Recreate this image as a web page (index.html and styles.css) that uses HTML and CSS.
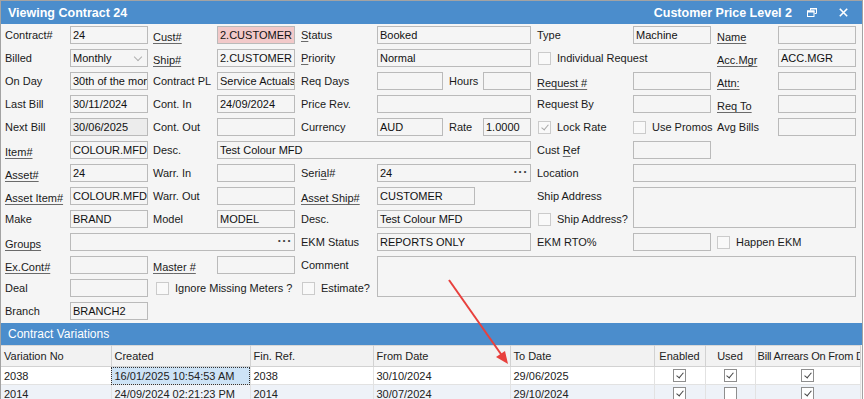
FILE: index.html
```html
<!DOCTYPE html>
<html lang="en">
<head>
    <meta charset="UTF-8">
    <meta name="viewport" content="width=device-width, initial-scale=1.0">
    <title>Viewing Contract 24</title>
    <link rel="stylesheet" href="styles.css">
</head>
<body>
<div class="window">
    <div class="titlebar">
        <span class="title">Viewing Contract 24</span>
        <span class="title-right">Customer Price Level 2</span>
        <svg class="restore" width="10" height="9" viewBox="0 0 10 9">
            <path d="M3.5 2.5V0.5h6v5H7.5" fill="none" stroke="#fff" stroke-width="1"/>
            <rect x="0.5" y="3" width="6.5" height="5.5" fill="none" stroke="#fff" stroke-width="1"/>
            <rect x="0" y="2.5" width="7.5" height="2" fill="#fff"/>
            <rect x="3" y="0" width="7" height="1.5" fill="#fff"/>
        </svg>
        <svg class="close" width="9" height="9" viewBox="0 0 9 9">
            <path d="M0.8 0.8L8.2 8.2M8.2 0.8L0.8 8.2" stroke="#fff" stroke-width="1.6"/>
        </svg>
    </div>

    <div class="form">
        <!-- row 1 -->
        <div class="lb c1">Contract#</div>
        <div class="box c2">24</div>
        <div class="lb c3 lnk">Cust#</div>
        <div class="box c4 pink">2.CUSTOMER</div>
        <div class="lb c5"><u>S</u>tatus</div>
        <div class="box s6-8">Booked</div>
        <div class="lb c9">Type</div>
        <div class="box c10">Machine</div>
        <div class="lb c11 lnk">Name</div>
        <div class="box c12"></div>

        <!-- row 2 -->
        <div class="lb c1">Billed</div>
        <div class="box c2 combo">Monthly<span class="chev"></span></div>
        <div class="lb c3 lnk">Ship#</div>
        <div class="box c4">2.CUSTOMER</div>
        <div class="lb c5"><u>P</u>riority</div>
        <div class="box s6-8">Normal</div>
        <div class="chk s9-10"><span class="cb"></span>Individual Request</div>
        <div class="lb c11 lnk">Acc.<u>M</u>gr</div>
        <div class="box c12">ACC.MGR</div>

        <!-- row 3 -->
        <div class="lb c1">On Day</div>
        <div class="box c2">30th of the month</div>
        <div class="lb c3">Contract PL</div>
        <div class="box c4">Service Actuals</div>
        <div class="lb c5">Req Days</div>
        <div class="box c6"></div>
        <div class="lb c7">Hours</div>
        <div class="box c8"></div>
        <div class="lb c9 lnk">Request #</div>
        <div class="box c10"></div>
        <div class="lb c11 lnk">Attn:</div>
        <div class="box c12"></div>

        <!-- row 4 -->
        <div class="lb c1">Last Bill</div>
        <div class="box c2">30/11/2024</div>
        <div class="lb c3">Cont. In</div>
        <div class="box c4">24/09/2024</div>
        <div class="lb c5">Price Rev.</div>
        <div class="box s6-8"></div>
        <div class="lb c9">Request By</div>
        <div class="box c10"></div>
        <div class="lb c11 lnk">Req To</div>
        <div class="box c12"></div>

        <!-- row 5 -->
        <div class="lb c1">Next Bill</div>
        <div class="box c2 ro">30/06/2025</div>
        <div class="lb c3">Cont. Out</div>
        <div class="box c4"></div>
        <div class="lb c5">Currency</div>
        <div class="box c6">AUD</div>
        <div class="lb c7">Rate</div>
        <div class="box c8">1.0000</div>
        <div class="chk c9"><span class="cb on dim"></span>Lock Rate</div>
        <div class="chk c10 flush"><span class="cb"></span>Use Promos</div>
        <div class="lb c11">Avg Bills</div>
        <div class="box c12"></div>

        <!-- row 6 -->
        <div class="lb c1 lnk">Item#</div>
        <div class="box c2">COLOUR.MFD</div>
        <div class="lb c3">Desc.</div>
        <div class="box s4-8">Test Colour MFD</div>
        <div class="lb c9">Cust <u>R</u>ef</div>
        <div class="box c10"></div>

        <!-- row 7 -->
        <div class="lb c1 lnk">Asset#</div>
        <div class="box c2">24</div>
        <div class="lb c3">Warr. In</div>
        <div class="box c4"></div>
        <div class="lb c5">Seri<u>a</u>l#</div>
        <div class="box s6-8 dots">24</div>
        <div class="lb c9">Location</div>
        <div class="box s10-12"></div>

        <!-- row 8 -->
        <div class="lb c1 lnk">Asset Item#</div>
        <div class="box c2">COLOUR.MFD</div>
        <div class="lb c3">Warr. Out</div>
        <div class="box c4"></div>
        <div class="lb c5 lnk">Asset S<u>h</u>ip#</div>
        <div class="box s6-8 short">CUSTOMER</div>
        <div class="lb c9">Ship Address</div>
        <div class="box s10-12 tall"></div>

        <!-- row 9 -->
        <div class="lb c1">Make</div>
        <div class="box c2">BRAND</div>
        <div class="lb c3">Model</div>
        <div class="box c4">MODEL</div>
        <div class="lb c5">Desc.</div>
        <div class="box s6-8">Test Colour MFD</div>
        <div class="chk c9"><span class="cb"></span>Ship Address?</div>

        <!-- row 10 -->
        <div class="lb c1 lnk">Groups</div>
        <div class="box s2-4 dots"></div>
        <div class="lb c5">EKM Status</div>
        <div class="box s6-8">REPORTS ONLY</div>
        <div class="lb c9">EKM RTO%</div>
        <div class="box c10"></div>
        <div class="chk c11 near"><span class="cb"></span>Happen EKM</div>

        <!-- row 11 -->
        <div class="lb c1 lnk">Ex.Cont#</div>
        <div class="box c2"></div>
        <div class="lb c3 lnk">Mas<u>t</u>er #</div>
        <div class="box c4"></div>
        <div class="lb c5">Comment</div>
        <div class="box s6-12 tall"></div>

        <!-- row 12 -->
        <div class="lb c1">Deal</div>
        <div class="box c2"></div>
        <div class="chk s3-4 wide"><span class="cb"></span>Ignore Missing Meters ?</div>
        <div class="chk c5"><span class="cb"></span>Estimate?</div>

        <!-- row 13 -->
        <div class="lb c1">Branch</div>
        <div class="box c2">BRANCH2</div>
    </div>

    <div class="section-head">Contract Variations</div>

    <table class="vgrid">
        <colgroup>
            <col class="w-no">
            <col class="w-created">
            <col class="w-fin">
            <col class="w-from">
            <col class="w-to">
            <col class="w-en">
            <col class="w-used">
            <col class="w-bill">
        </colgroup>
        <thead>
            <tr>
                <th>Variation No</th>
                <th>Created</th>
                <th>Fin. Ref.</th>
                <th>From Date</th>
                <th>To Date</th>
                <th class="mid">Enabled</th>
                <th class="mid">Used</th>
                <th class="tight">Bill Arrears On From Date</th>
            </tr>
        </thead>
        <tbody>
            <tr>
                <td>2038</td>
                <td class="sel">16/01/2025 10:54:53 AM</td>
                <td>2038</td>
                <td>30/10/2024</td>
                <td>29/06/2025</td>
                <td class="mid"><span class="gcb on"></span></td>
                <td class="mid"><span class="gcb on"></span></td>
                <td class="mid"><span class="gcb on"></span></td>
            </tr>
            <tr class="alt">
                <td>2014</td>
                <td>24/09/2024 02:21:23 PM</td>
                <td>2014</td>
                <td>30/07/2024</td>
                <td>29/10/2024</td>
                <td class="mid"><span class="gcb on"></span></td>
                <td class="mid"><span class="gcb"></span></td>
                <td class="mid"><span class="gcb on"></span></td>
            </tr>
        </tbody>
    </table>

    <svg class="arrow" width="864" height="399" viewBox="0 0 864 399">
        <line x1="449" y1="280" x2="503" y2="357" stroke="#e8403d" stroke-width="2"/>
        <path d="M508 364L496 357L505 351Z" fill="#e8403d"/>
    </svg>
</div>
</body>
</html>
```

FILE: styles.css
```css
html, body {
    margin: 0;
    padding: 0;
    background: #ffffff;
    overflow: hidden;
}
body {
    font-family: "Liberation Sans", Arial, sans-serif;
    font-size: 11px;
    color: #1a1a1a;
}
.window {
    position: relative;
    width: 863px;
    height: 399px;
    box-sizing: border-box;
    border: 1px solid #a3a3a3;
    border-bottom: none;
    background: #f5f5f5;
    overflow: hidden;
}

/* title bar */
.titlebar {
    height: 23px;
    background: #4b8dcc;
    color: #fff;
    display: flex;
    align-items: center;
    padding: 0 0 0 7px;
}
.title {
    font-weight: bold;
    font-size: 12.5px;
    flex: 1;
}
.title-right {
    font-weight: bold;
    font-size: 12.5px;
    margin-right: 15px;
}
.restore {
    margin-right: 22px;
    margin-top: -1px;
}
.close {
    margin-right: 14px;
}

/* form grid */
.form {
    display: grid;
    grid-template-columns: 66px 78px 69px 78px 82px 66px 40px 48px 102px 78px 67px 78px;
    grid-auto-rows: 18px;
    row-gap: 5px;
    padding: 2px 0 3px 3px;
}
.c1 { grid-column: 1; }
.c2 { grid-column: 2; }
.c3 { grid-column: 3; }
.c4 { grid-column: 4; }
.c5 { grid-column: 5; }
.c6 { grid-column: 6; }
.c7 { grid-column: 7; }
.c8 { grid-column: 8; }
.c9 { grid-column: 9; }
.c10 { grid-column: 10; }
.c11 { grid-column: 11; }
.c12 { grid-column: 12; }
.s2-4 { grid-column: 2 / 5; }
.s3-4 { grid-column: 3 / 5; }
.s4-8 { grid-column: 4 / 9; }
.s6-8 { grid-column: 6 / 9; }
.s6-12 { grid-column: 6 / 13; }
.s9-10 { grid-column: 9 / 11; }
.s10-12 { grid-column: 10 / 13; }

.lb {
    line-height: 18px;
    padding-left: 6px;
    white-space: nowrap;
}
.lb.c1 {
    padding-left: 1px;
}
.lb.c3 {
    padding-left: 5px;
}
.lb u, .lnk {
    text-decoration: underline;
    text-underline-offset: 2px;
    text-decoration-color: #6a6a6a;
}
.lnk {
    padding-top: 2px;
    height: 16px;
}

.box {
    box-sizing: border-box;
    height: 18px;
    border: 1px solid #bababa;
    background: #f5f5f5;
    line-height: 16px;
    padding-left: 2px;
    white-space: nowrap;
    overflow: hidden;
    color: #111;
    position: relative;
}
.box.pink {
    background: #f2c9c9;
}
.box.ro {
    background: #ececec;
}
.box.short {
    width: 98px;
}
.box.tall {
    grid-row: span 2;
    height: 41px;
}
.box.dots::after {
    content: "\00b7\00b7\00b7";
    position: absolute;
    right: 2px;
    top: -1px;
    font-weight: bold;
    font-size: 13px;
    color: #444;
    letter-spacing: 0.5px;
}
.combo .chev {
    position: absolute;
    right: 6px;
    top: 4px;
    width: 5px;
    height: 5px;
    border-right: 1px solid #b0b0b0;
    border-bottom: 1px solid #b0b0b0;
    transform: rotate(45deg);
}

/* checkboxes */
.chk {
    display: flex;
    align-items: center;
    padding-left: 7px;
    white-space: nowrap;
}
.chk.flush {
    padding-left: 0;
}
.chk.near {
    padding-left: 6px;
}
.chk.wide {
    padding-left: 8px;
}
.cb {
    width: 13px;
    height: 13px;
    box-sizing: border-box;
    border: 1px solid #cbcbcb;
    background: #f9f9f9;
    margin-right: 6px;
    position: relative;
    flex: none;
}
.cb.on::after, .gcb.on::after {
    content: "";
    position: absolute;
    left: 3.5px;
    top: 1px;
    width: 3px;
    height: 6px;
    border-right: 1.5px solid #444;
    border-bottom: 1.5px solid #444;
    transform: rotate(40deg);
}
.cb.dim::after {
    border-color: #a8a8a8;
}

/* variations grid */
.section-head {
    height: 22px;
    line-height: 22px;
    background: #4b8dcc;
    color: #fff;
    font-size: 12px;
    padding-left: 7px;
}
.vgrid {
    border-collapse: collapse;
    table-layout: fixed;
    width: 859px;
    background: #fff;
}
.w-no { width: 110px; }
.w-created { width: 139px; }
.w-fin { width: 123px; }
.w-from { width: 137px; }
.w-to { width: 144px; }
.w-en { width: 51px; }
.w-used { width: 50px; }
.w-bill { width: 105px; }
.vgrid th, .vgrid td {
    font-weight: normal;
    text-align: left;
    white-space: nowrap;
    overflow: hidden;
    padding: 0 0 0 3px;
    font-size: 11px;
    color: #222;
}
.vgrid th.tight {
    padding-left: 2px;
    letter-spacing: -0.2px;
}
.vgrid th {
    height: 20px;
    background: #f2f2f2;
    border-right: 1px solid #d2d2d2;
    border-bottom: 1px solid #d2d2d2;
    border-top: 1px solid #d8d8d8;
}
.vgrid td {
    height: 17px;
    border-right: 1px solid #e2e2e2;
    border-bottom: 1px solid #e2e2e2;
}
.vgrid .mid {
    text-align: center;
    padding: 0;
}
.vgrid tr.alt td {
    background: #eef2f8;
}
.vgrid td.sel {
    background: #cde3f6;
    outline: 1px dotted #333;
    outline-offset: -1px;
}
.gcb {
    display: inline-block;
    width: 13px;
    height: 13px;
    box-sizing: border-box;
    border: 1px solid #8e8e8e;
    background: #fff;
    position: relative;
    vertical-align: middle;
}

.arrow {
    position: absolute;
    left: -1px;
    top: -1px;
    pointer-events: none;
}
```
